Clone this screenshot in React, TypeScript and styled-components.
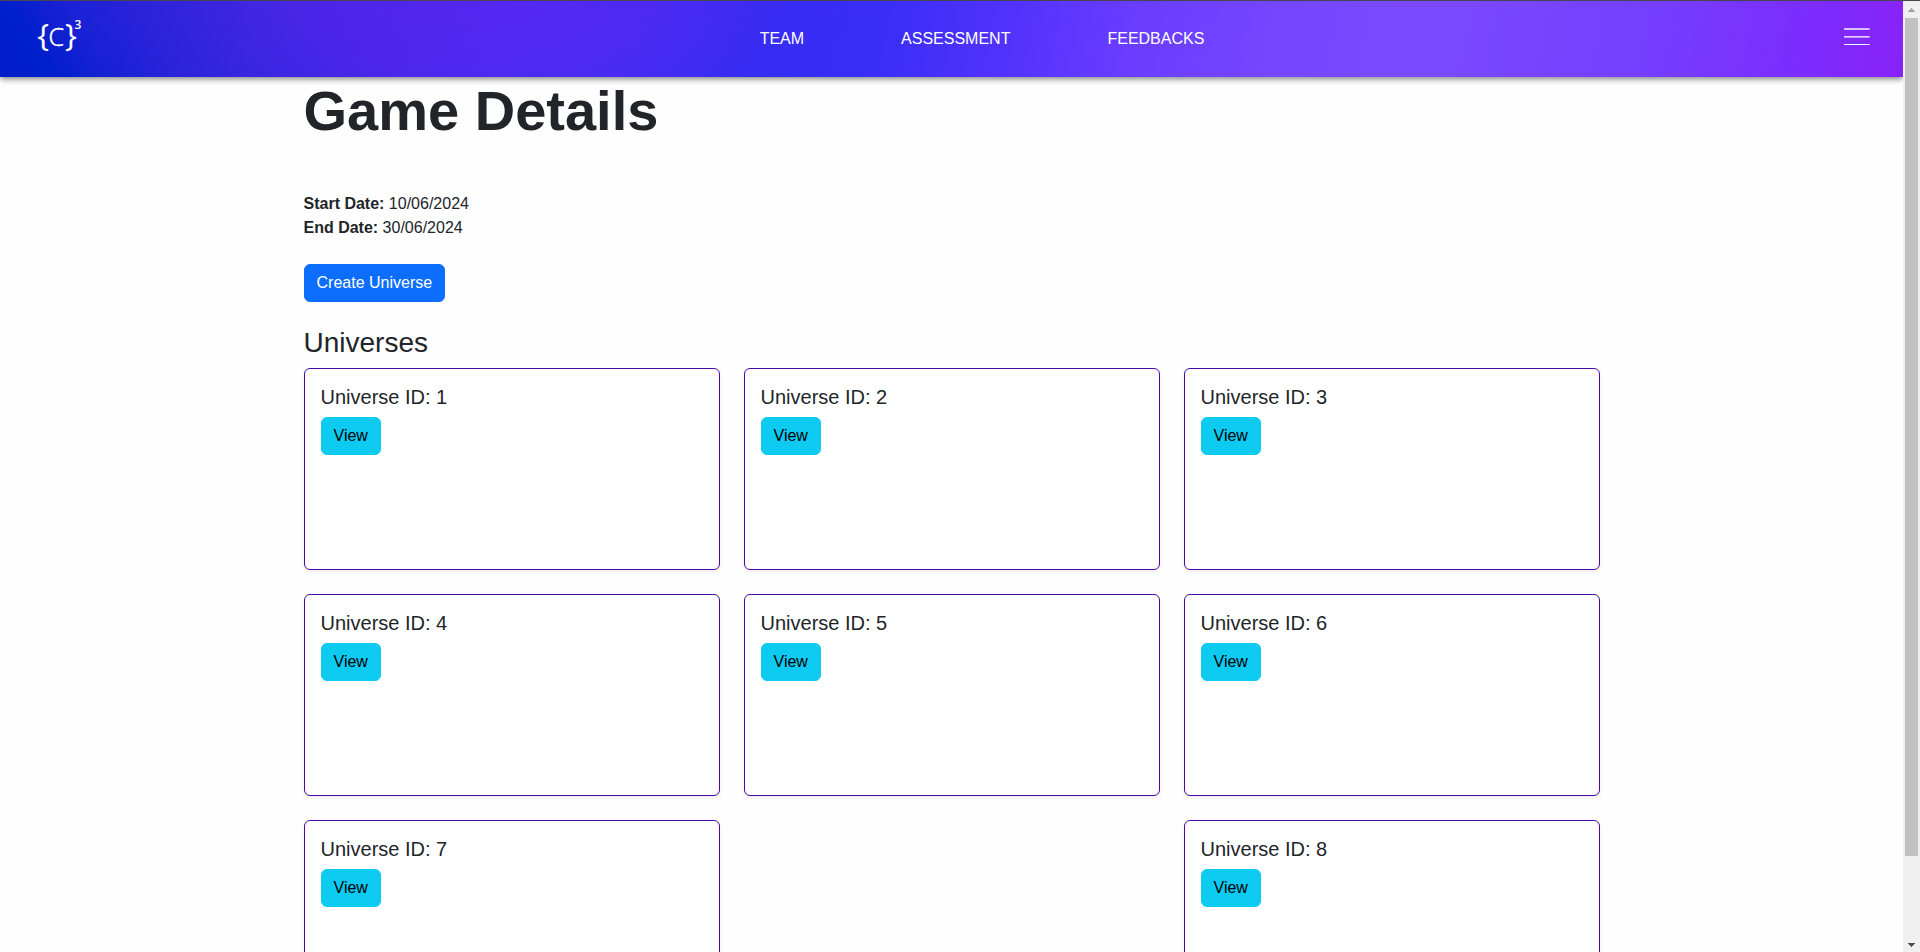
import React from "react";
import styled, { createGlobalStyle } from "styled-components";

const GlobalStyle = createGlobalStyle`
  *, *::before, *::after { box-sizing: border-box; }
  html, body { margin: 0; height: 100%; overflow: hidden; }
  body {
    background: #fefefe;
    color: #212529;
    font-family: "Liberation Sans", Arial, sans-serif;
    font-size: 16px;
    line-height: 1.5;
  }
`;

const Window = styled.div`
  display: flex;
  height: 952px;
  border-top: 1px solid #47454d;
  overflow: hidden;
`;

const Page = styled.div`
  flex: 1;
  min-width: 0;
  overflow: hidden;
`;

const Header = styled.header`
  position: relative;
  display: grid;
  grid-template-columns: 1fr auto 1fr;
  height: 76px;
  background:
    linear-gradient(
      54deg,
      #001fc9 0px,
      #001fcd 45px,
      rgba(0, 31, 205, 0.5) 95px,
      rgba(0, 31, 205, 0.25) 150px,
      rgba(0, 31, 205, 0) 290px
    ),
    radial-gradient(420px 90px at 480px 0px, rgba(110, 32, 240, 0.25), rgba(110, 32, 240, 0)),
    linear-gradient(
      102deg,
      #3422da 0px,
      #3424dd 130px,
      #4127e3 250px,
      #4927ea 390px,
      #4c2af0 500px,
      #472bf2 630px,
      #342df2 765px,
      #3a2ef6 870px,
      #5132fb 990px,
      #693cff 1110px,
      #7545ff 1250px,
      #7b4aff 1400px,
      #753eff 1620px,
      #7b2dfd 1770px,
      #8822f8 1875px
    );
  box-shadow: 0 2px 6px rgba(0, 0, 0, 0.5);
`;

const Logo = styled.svg`
  width: 60px;
  height: 60px;
  margin: 5px 0 0 30px;
  fill: #fff;
  font-family: "Open Sans", "Noto Sans", sans-serif;
`;

const Nav = styled.nav`
  display: flex;
  gap: 97px;
  padding: 26px 0 0 61px;
`;

const NavLink = styled.a`
  color: #fff;
`;

const MenuButton = styled.div`
  justify-self: end;
  padding: 27px 33px 0 0;
  line-height: 0;
`;

const Main = styled.main`
  width: 1320px;
  margin: 0 auto;
  padding: 0 12px;
`;

const Title = styled.h1`
  margin: 0 0 48px;
  font-size: 56px;
  font-weight: 700;
  line-height: 1.2;
`;

const Dates = styled.div`
  margin-bottom: 24px;
`;

const SectionTitle = styled.h3`
  margin: 24px 0 8px;
  font-size: 28px;
  font-weight: 400;
  line-height: 1.2;
`;

const Button = styled.button<{ $variant: "primary" | "info" }>`
  display: block;
  height: 38px;
  padding: 6px 12px;
  border: 1px solid ${(p) => (p.$variant === "primary" ? "#0d6efd" : "#0dcaf0")};
  border-radius: 6px;
  background: ${(p) => (p.$variant === "primary" ? "#0d6efd" : "#0dcaf0")};
  color: ${(p) => (p.$variant === "primary" ? "#fff" : "#000")};
  font: inherit;
`;

const Grid = styled.div`
  display: grid;
  grid-template-columns: repeat(3, 416px);
  grid-auto-rows: 202px;
  gap: 24px;
`;

const Card = styled.section<{ $column?: number }>`
  grid-column: ${(p) => p.$column ?? "auto"};
  padding: 16px;
  border: 1px solid #4a0aa4;
  border-radius: 6px;
  background: #fff;
  box-shadow: 0 2px 4px rgba(0, 0, 0, 0.075);
`;

const CardTitle = styled.h5`
  margin: 0 0 8px;
  font-size: 20px;
  font-weight: 400;
  line-height: 1.2;
`;

const Scrollbar = styled.div`
  display: flex;
  flex-direction: column;
  align-items: center;
  width: 17px;
  background: #f0f0f0;
`;

const ScrollArrow = styled.svg`
  display: block;
  width: 17px;
  height: 17px;
`;

const ScrollThumb = styled.div`
  width: 13px;
  height: 838px;
  margin-bottom: auto;
  background: #c1c1c1;
`;

const links = ["TEAM", "ASSESSMENT", "FEEDBACKS"];

const universes: { id: number; column?: number }[] = [
  { id: 1 }, { id: 2 }, { id: 3 },
  { id: 4 }, { id: 5 }, { id: 6 },
  { id: 7 }, { id: 8, column: 3 },
];

export default function App() {
  return (
    <>
      <GlobalStyle />
      <Window>
        <Page>
          <Header>
            <Logo viewBox="0 0 60 60">
              <text x="7.2" y="40" fontSize="31.5">{"{"}</text>
              <text x="18.4" y="39.8" fontSize="25" fontWeight="300" stroke="#fff" strokeWidth="0.5">C</text>
              <text x="35" y="40" fontSize="31.5">{"}"}</text>
              <text x="44.4" y="23.3" fontSize="12" fontWeight="600">3</text>
            </Logo>
            <Nav>
              {links.map((label) => (
                <NavLink key={label}>{label}</NavLink>
              ))}
            </Nav>
            <MenuButton aria-label="Menu">
              <svg width="26" height="18" viewBox="0 0 26 18" fill="#fff">
                <rect y="0.3" width="25.6" height="1.4" />
                <rect y="8.2" width="25.6" height="1.3" />
                <rect y="16" width="25.6" height="1" />
              </svg>
            </MenuButton>
          </Header>
          <Main>
            <Title>Game Details</Title>
            <Dates>
              <div><strong>Start Date:</strong> 10/06/2024</div>
              <div><strong>End Date:</strong> 30/06/2024</div>
            </Dates>
            <Button $variant="primary">Create Universe</Button>
            <SectionTitle>Universes</SectionTitle>
            <Grid>
              {universes.map((u) => (
                <Card key={u.id} $column={u.column}>
                  <CardTitle>Universe ID: {u.id}</CardTitle>
                  <Button $variant="info">View</Button>
                </Card>
              ))}
            </Grid>
          </Main>
        </Page>
        <Scrollbar>
          <ScrollArrow viewBox="0 0 17 17" shapeRendering="crispEdges">
            <path d="M8 7h1v1h1v1h1v1h1v1H5v-1h1V9h1V8h1z" fill="#a3a3a3" />
          </ScrollArrow>
          <ScrollThumb />
          <ScrollArrow viewBox="0 0 17 17" shapeRendering="crispEdges">
            <path d="M5 8h7v1h-1v1h-1v1H9v1H8v-1H7v-1H6V9H5z" fill="#505050" />
          </ScrollArrow>
        </Scrollbar>
      </Window>
    </>
  );
}
